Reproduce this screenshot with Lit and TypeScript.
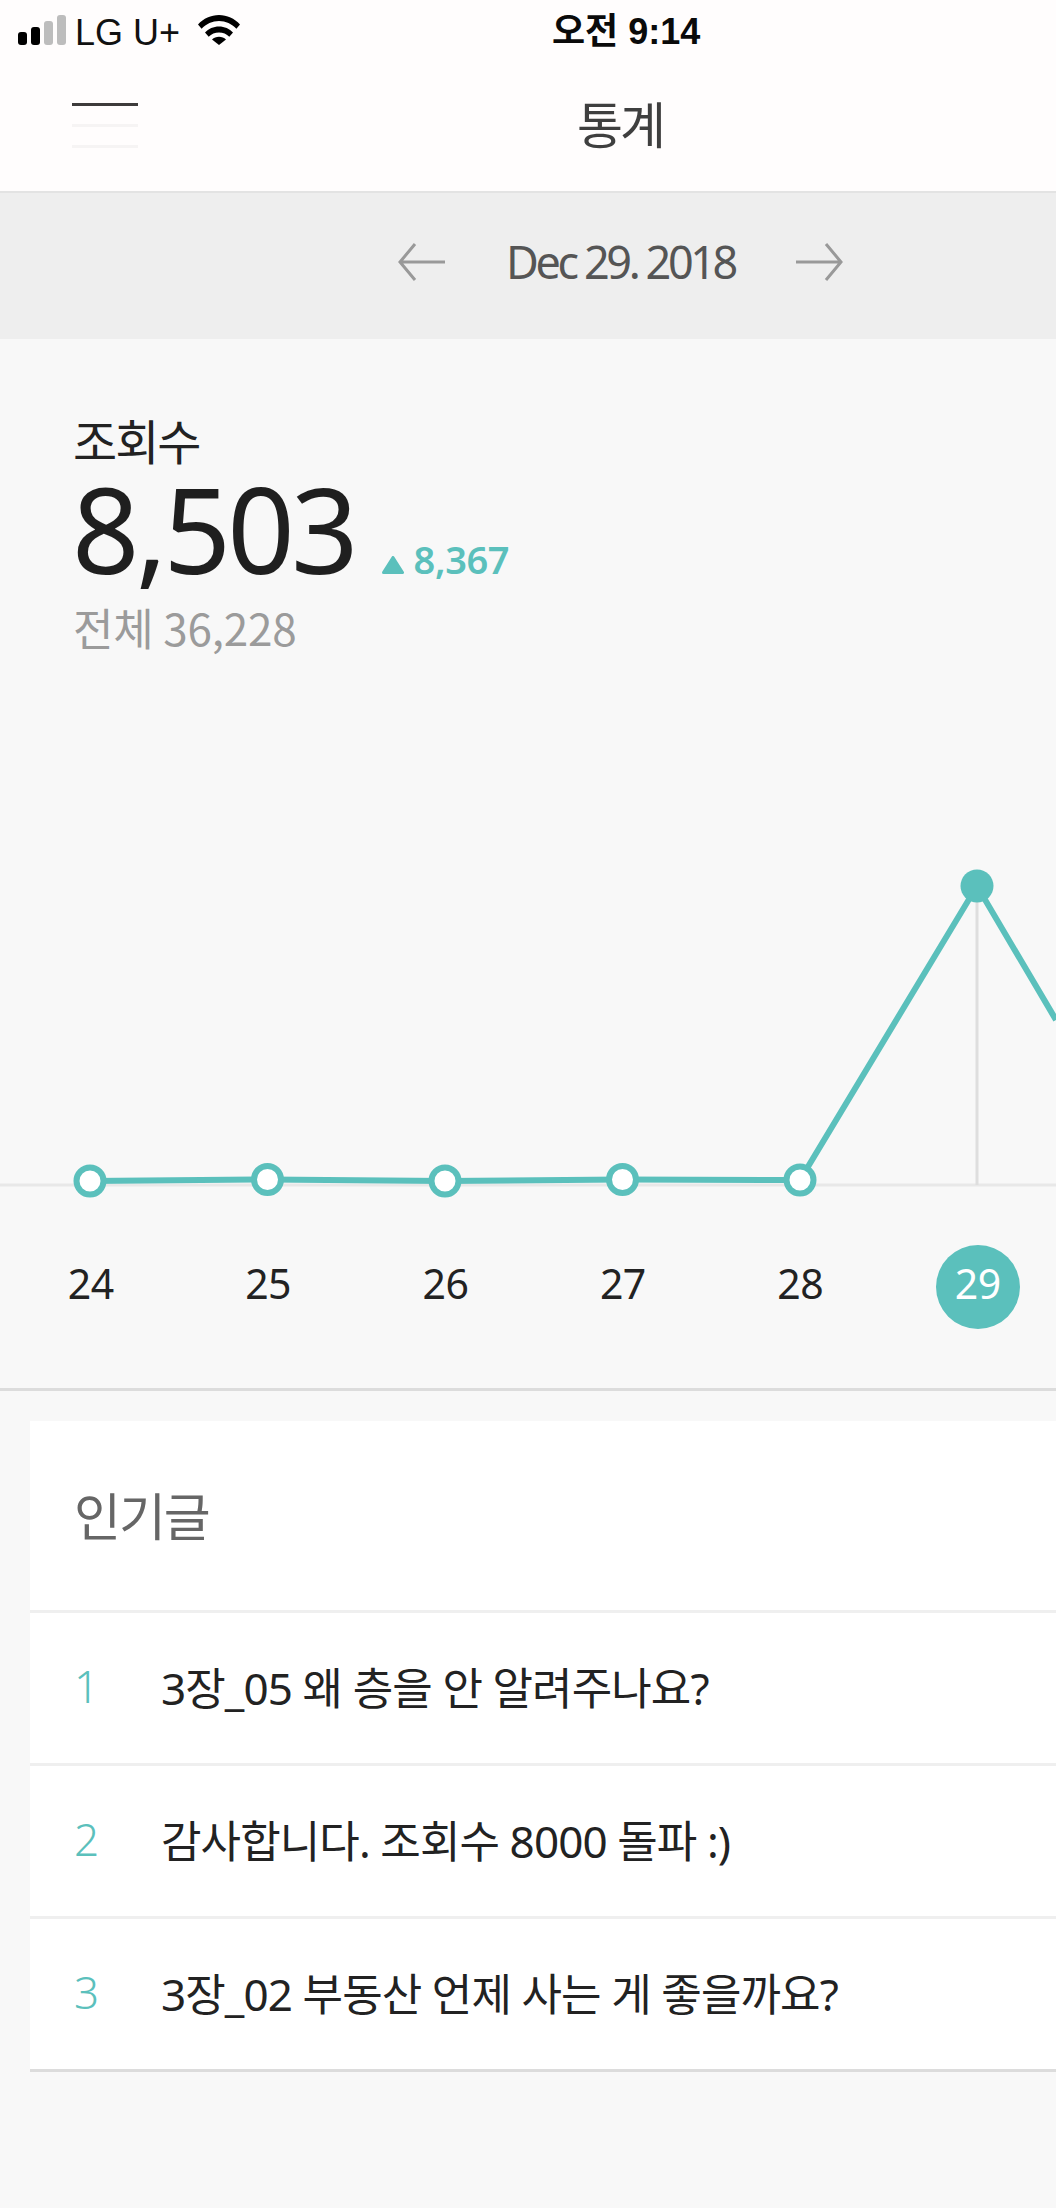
import { LitElement, html, css, svg } from "lit";
import { customElement } from "lit/decorators.js";

const POINTS: [number, number][] = [
  [90, 1181],
  [267.5, 1179.5],
  [445, 1181],
  [622.5, 1179.5],
  [800, 1180],
  [977, 886],
];

const DAYS = [24, 25, 26, 27, 28, 29];
const POSTS = [
  "3장_05 왜 층을 안 알려주나요?",
  "감사합니다. 조회수 8000 돌파 :)",
  "3장_02 부동산 언제 사는 게 좋을까요?",
];
const TOP = 860;

@customElement("app-root")
export class AppRoot extends LitElement {
  static styles = css`
    :host {
      display: block;
      width: 1056px;
      height: 2208px;
      overflow: hidden;
      background: #f8f8f8;
      font-family: "Noto Sans", "Noto Sans CJK KR", sans-serif;
      color: #222;
    }
    .top {
      background: #fffdfd;
      height: 193px;
      box-sizing: border-box;
      border-bottom: 2px solid #e3e3e3;
    }
    .status {
      height: 63px;
      display: flex;
      align-items: flex-start;
      position: relative;
      padding: 15px 0 0 18px;
      box-sizing: border-box;
    }
    .signal {
      display: block;
    }
    .carrier {
      font-family: "Liberation Sans", sans-serif;
      font-size: 36px;
      line-height: 36px;
      color: #111;
      margin-left: 9px;
      width: 123px;
      white-space: nowrap;
    }
    .wifi {
      display: block;
    }
    .time {
      position: absolute;
      left: 552px;
      top: 12px;
      font-family: "Liberation Sans", "Noto Sans CJK KR", sans-serif;
      font-weight: 700;
      font-size: 36px;
      line-height: 40px;
      color: #0a0a0a;
      white-space: nowrap;
    }
    .nav {
      height: 127px;
      display: flex;
      align-items: flex-start;
      padding-left: 72px;
    }
    .burger {
      display: flex;
      flex-direction: column;
      gap: 18px;
      width: 66px;
      padding-top: 40px;
    }
    .burger i {
      display: block;
      height: 3px;
      background: #f6f4f4;
    }
    .burger i:first-child {
      background: #3d3b3b;
    }
    .title {
      margin-left: 439px;
      padding-top: 27px;
      font-family: "Noto Sans CJK KR", sans-serif;
      font-weight: 400;
      font-size: 50px;
      line-height: 64px;
      letter-spacing: -3px;
      color: #3f3f3f;
    }
    .datebar {
      height: 146px;
      background: #eeeeee;
      display: flex;
      align-items: center;
      padding: 0 0 8px 398px;
      box-sizing: border-box;
    }
    .date {
      font-size: 45px;
      line-height: 60px;
      letter-spacing: -3.4px;
      color: #555;
      width: 351px;
      text-align: center;
      white-space: nowrap;
      flex: none;
    }
    .stats {
      background: #f8f8f8;
      height: 1052px;
      box-sizing: border-box;
      border-bottom: 3px solid #dcdcdc;
      padding-top: 70px;
    }
    .block {
      padding-left: 72px;
    }
    .label {
      font-family: "Noto Sans CJK KR", sans-serif;
      font-size: 48px;
      line-height: 60px;
      letter-spacing: -2px;
      color: #222;
      margin-left: 1px;
    }
    .nums {
      display: flex;
      align-items: baseline;
      height: 100px;
      margin-top: 10px;
    }
    .big {
      font-size: 118px;
      line-height: 100px;
      letter-spacing: -3.8px;
      color: #1f1f1f;
      font-weight: 400;
    }
    .delta {
      display: flex;
      align-items: baseline;
      margin-left: 27px;
      font-size: 38px;
      font-weight: 600;
      letter-spacing: -0.4px;
      color: #5bc0bc;
    }
    .delta svg {
      margin: 0 10px 4px 0;
    }
    .total {
      font-family: "Noto Sans CJK KR", sans-serif;
      font-size: 44px;
      line-height: 60px;
      margin: 18px 0 0 1px;
      letter-spacing: -0.2px;
      color: #9b9b9b;
    }
    .chart {
      display: block;
      margin-top: 203px;
    }
    .days {
      display: grid;
      grid-template-columns: repeat(6, 177.4px);
      padding-left: 2px;
      margin-top: 41px;
    }
    .day {
      display: flex;
      justify-content: center;
      align-items: center;
      height: 84px;
      font-size: 41px;
      letter-spacing: -0.5px;
      color: #222;
    }
    .day span {
      width: 84px;
      height: 84px;
      box-sizing: border-box;
      padding-bottom: 8px;
      border-radius: 50%;
      display: flex;
      align-items: center;
      justify-content: center;
    }
    .day .on {
      background: #5bc0bc;
      color: #fff;
    }
    .card {
      margin: 30px 0 0 30px;
      background: #fff;
      border-bottom: 3px solid #dcdcdc;
    }
    .head {
      height: 189px;
      box-sizing: border-box;
      padding: 0 0 4px 44px;
      display: flex;
      align-items: center;
      font-family: "Noto Sans CJK KR", sans-serif;
      font-size: 51px;
      letter-spacing: -2px;
      color: #666;
    }
    .row {
      height: 153px;
      box-sizing: border-box;
      border-top: 3px solid #efefef;
      display: flex;
      align-items: center;
      padding: 0 0 5px 44px;
      font-size: 44px;
      font-family: "Noto Sans", "Noto Sans CJK KR", sans-serif;
      color: #222;
      letter-spacing: -0.9px;
      white-space: nowrap;
    }
    .row b {
      width: 87px;
      font-weight: 300;
      color: #5bc0bc;
      flex: none;
    }
  `;

  private renderChart() {
    const line = [...POINTS, [1056, 1020] as [number, number]]
      .map(([x, y]) => `${x},${y - TOP}`)
      .join(" ");
    return html`<svg class="chart" width="1056" height="344" viewBox="0 0 1056 344">
      ${svg`<line x1="0" y1="${1185 - TOP}" x2="1056" y2="${1185 - TOP}" stroke="#e8e8e8" stroke-width="3"/>
      <line x1="977" y1="${886 - TOP}" x2="977" y2="${1185 - TOP}" stroke="#dedede" stroke-width="3"/>
      <polyline points="${line}" fill="none" stroke="#5bc0bc" stroke-width="6"/>
      ${POINTS.map(([x, y], i) =>
        i === 5
          ? svg`<circle cx="${x}" cy="${y - TOP}" r="16.5" fill="#5bc0bc"/>`
          : svg`<circle cx="${x}" cy="${y - TOP}" r="13.5" fill="#fff" stroke="#5bc0bc" stroke-width="6"/>`
      )}`}
    </svg>`;
  }

  render() {
    return html`
      <div class="top">
        <div class="status">
          <svg class="signal" width="48" height="30" viewBox="0 0 48 30">
            <rect x="0" y="17" width="9" height="13" rx="3" fill="#000"/>
            <rect x="13" y="12" width="9" height="18" rx="3" fill="#000"/>
            <rect x="26" y="6" width="9" height="24" rx="3" fill="#bdbdbd"/>
            <rect x="39" y="0" width="9" height="30" rx="3" fill="#bdbdbd"/>
          </svg>
          <span class="carrier">LG U+</span>
          <svg class="wifi" width="42" height="30" viewBox="0 0 42 30">
            <path d="M0 9.500C5.500 3.500 13 0 21 0s15.500 3.500 21 9.500l-3.600 4.200C33.800 9 27.700 6 21 6S8.200 9 3.600 13.700Z" fill="#000"/>
            <path d="M7 17.500C10.500 13.800 15.500 11.500 21 11.500s10.500 2.300 14 6l-3.700 4.200C28.600 19 25 17.500 21 17.500s-7.600 1.500-10.300 4.200Z" fill="#000"/>
            <path d="M14 24.500c1.900-1.700 4.300-2.700 7-2.700s5.100 1 7 2.700L21 30Z" fill="#000"/>
          </svg>
          <span class="time">오전 9:14</span>
        </div>
        <div class="nav">
          <div class="burger"><i></i><i></i><i></i></div>
          <div class="title">통계</div>
        </div>
      </div>
      <div class="datebar">
        <svg width="47" height="38" viewBox="0 0 47 38">
          <path d="M47 19H2M17 1 2 19l15 18" fill="none" stroke="#999" stroke-width="3"/>
        </svg>
        <div class="date">Dec 29. 2018</div>
        <svg width="47" height="38" viewBox="0 0 47 38">
          <path d="M0 19h45M30 1l15 18-15 18" fill="none" stroke="#999" stroke-width="3"/>
        </svg>
      </div>
      <div class="stats">
        <div class="block">
          <div class="label">조회수</div>
          <div class="nums">
            <span class="big">8,503</span>
            <span class="delta">
              <svg width="22" height="18" viewBox="0 0 22 18"><path d="M11 1.500 20.500 16.500H1.500Z" fill="#5bc0bc" stroke="#5bc0bc" stroke-width="3" stroke-linejoin="round"/></svg>
              8,367
            </span>
          </div>
          <div class="total">전체 36,228</div>
        </div>
        ${this.renderChart()}
        <div class="days">
          ${DAYS.map(
            (d) => html`<div class="day"><span class=${d === 29 ? "on" : ""}>${d}</span></div>`
          )}
        </div>
      </div>
      <div class="card">
        <div class="head">인기글</div>
        ${POSTS.map(
          (p, i) => html`<div class="row"><b>${i + 1}</b><span>${p}</span></div>`
        )}
      </div>
    `;
  }
}
